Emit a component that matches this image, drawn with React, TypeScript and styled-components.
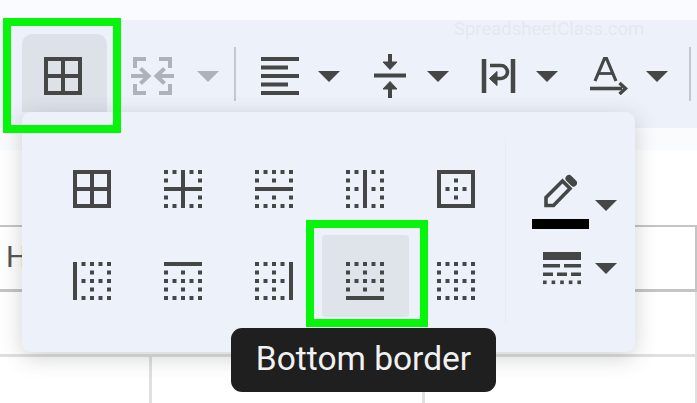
import React from "react";
import styled, { createGlobalStyle } from "styled-components";

const Global = createGlobalStyle`
  html, body { margin: 0; padding: 0; background: #fff; overflow: hidden; }
  * { box-sizing: border-box; }
`;

const ICON = "#444746";
const GREEN = "#06f50a";

const Page = styled.div`
  position: relative;
  width: 697px;
  height: 403px;
  overflow: hidden;
  background: #fff;
  font-family: Roboto, "Liberation Sans", sans-serif;
`;
const TopStrip = styled.div`
  height: 20px;
  background: #fafbfe;
`;
const Toolbar = styled.div`
  height: 108px;
  background: #edf2fa;
  padding: 14px 0 0 22px;
  display: flex;
  align-items: flex-start;
`;
const BorderButton = styled.button`
  width: 85px;
  height: 78px;
  flex: none;
  margin-right: 24px;
  padding: 23px 3px 0 0;
  border: 0;
  border-radius: 10px 10px 0 0;
  background: #dde1e8;
  display: flex;
  justify-content: center;
  align-items: flex-start;
`;
const Tool = styled.div<{ $gap: number; $after: number }>`
  display: flex;
  flex: none;
  align-items: center;
  height: 38px;
  margin-top: 23px;
  gap: ${(p) => p.$gap}px;
  margin-right: ${(p) => p.$after}px;
`;
const Caret = styled.span<{ $muted?: boolean }>`
  display: block;
  width: 0;
  height: 0;
  flex: none;
  border-left: 11px solid transparent;
  border-right: 11px solid transparent;
  border-top: 11px solid ${(p) => (p.$muted ? "#aeb3ba" : ICON)};
`;
const ToolDivider = styled.div`
  width: 2px;
  height: 54px;
  flex: none;
  margin: 13px 25px 0 0;
  background: #c4c7cb;
`;
const FormulaStrip = styled.div`
  height: 22px;
  background: #fafbfd;
`;
const Sheet = styled.div`
  padding-top: 75px;
`;
const SelectedRow = styled.div`
  height: 67px;
  border-top: 2px solid #c4c4c4;
  border-bottom: 3px solid #c4c4c4;
  border-right: 2px solid #c4c4c4;
  padding: 12px 0 0 6px;
  font-size: 30px;
  line-height: 35px;
  color: #555;
`;
const PlainRow = styled.div`
  height: 65px;
  border-bottom: 3px solid #e0e0e0;
  border-right: 2px solid #e0e0e0;
`;
const ColumnsRow = styled.div`
  height: 46px;
  display: grid;
  grid-template-columns: 152px 273px 1fr;
`;
const Cell = styled.div<{ $thin?: boolean }>`
  border-right: ${(p) => (p.$thin ? 2 : 3)}px solid #e0e0e0;
`;
const Menu = styled.div`
  position: absolute;
  left: 22px;
  top: 112px;
  width: 613px;
  height: 240px;
  border-radius: 9px;
  background: #edf2fa;
  box-shadow: 0 5px 22px rgba(60, 64, 67, 0.24);
  display: flex;
  align-items: flex-start;
`;
const BorderGrid = styled.div`
  display: grid;
  grid-template-columns: repeat(5, 91px);
  grid-auto-rows: 92px;
  padding: 31px 0 0 26.5px;
  width: 483px;
  flex: none;
`;
const GridCell = styled.div<{ $hover?: boolean }>`
  width: 87px;
  height: 82px;
  padding-top: 27px;
  border-radius: 4px;
  background: ${(p) => (p.$hover ? "#dfe3ea" : "transparent")};
  display: flex;
  align-items: flex-start;
  justify-content: center;
`;
const SidePanel = styled.div`
  width: 130px;
  height: 188px;
  margin-top: 25px;
  padding: 36px 0 0 26px;
  border-left: 1px solid #e8edf5;
`;
const PenRow = styled.div`
  display: flex;
  align-items: flex-start;
  gap: 6px;
`;
const PenColumn = styled.div`
  width: 57px;
  display: flex;
  flex-direction: column;
  align-items: center;
  gap: 11px;
`;
const ColorBar = styled.div`
  width: 57px;
  height: 10px;
  background: #000;
`;
const PenCaret = styled.div`
  margin-top: 27px;
`;
const LineRow = styled.div`
  display: flex;
  align-items: center;
  gap: 14px;
  margin: 23px 0 0 11px;
`;
const Tooltip = styled.div`
  position: absolute;
  left: 231px;
  top: 328px;
  width: 265px;
  height: 64px;
  border-radius: 11px;
  background: #1f1f1f;
  color: #f1f1f1;
  font-size: 33.5px;
  line-height: 61px;
  text-align: center;
  white-space: nowrap;
`;
const Highlight = styled.div<{ $x: number; $y: number; $w: number; $h: number }>`
  position: absolute;
  left: ${(p) => p.$x}px;
  top: ${(p) => p.$y}px;
  width: ${(p) => p.$w}px;
  height: ${(p) => p.$h}px;
  border: 8px solid ${GREEN};
`;
const Watermark = styled.div`
  position: absolute;
  left: 454px;
  top: 18px;
  font-size: 18.5px;
  line-height: 22px;
  color: #e4e8f0;
  white-space: nowrap;
`;

const P = [0, 8.5, 17, 25.5, 34];
const S = 4;

const BorderIcon = ({ rows = [], cols = [] }: { rows?: number[]; cols?: number[] }) => (
  <svg width="38" height="38" viewBox="0 0 38 38" fill={ICON}>
    {rows.map((r) => <rect key={`r${r}`} x="0" y={P[r]} width="38" height={S} />)}
    {cols.map((c) => <rect key={`c${c}`} x={P[c]} y="0" width={S} height="38" />)}
    {P.flatMap((y, r) =>
      P.map((x, c) => {
        if (r % 2 === 1 && c % 2 === 1) return null;
        if (rows.includes(r) || cols.includes(c)) return null;
        return <rect key={`${r}-${c}`} x={x} y={y} width={S} height={S} />;
      })
    )}
  </svg>
);

const ALL = { rows: [0, 2, 4], cols: [0, 2, 4] };

const ICONS: { rows?: number[]; cols?: number[]; hover?: boolean }[] = [
  ALL,
  { rows: [2], cols: [2] },
  { rows: [2] },
  { cols: [2] },
  { rows: [0, 4], cols: [0, 4] },
  { cols: [0] },
  { rows: [0] },
  { cols: [4] },
  { rows: [4], hover: true },
  {},
];

const MergeIcon = () => (
  <svg width="43" height="38" viewBox="0 0 43 38" fill="none" stroke="#aeb3ba" strokeWidth="4">
    <path d="M15 2H4V11M4 27V36H15M28 2H39V11M39 27V36H28" />
    <path d="M0 19H15M43 19H28" />
    <path d="M9.5 11.5L17.5 19L9.5 26.5M33.5 11.5L25.5 19L33.5 26.5" />
  </svg>
);
const AlignIcon = () => (
  <svg width="38" height="38" viewBox="0 0 38 38" fill={ICON}>
    <rect width="38" height="4" />
    <rect y="8.5" width="27" height="4" />
    <rect y="17" width="38" height="4" />
    <rect y="25.5" width="27" height="4" />
    <rect y="34" width="38" height="4" />
  </svg>
);
const VAlignIcon = () => (
  <svg width="38" height="44" viewBox="0 0 38 44" fill="none" stroke={ICON}>
    <path d="M3 21.5H35" strokeWidth="4" />
    <path d="M19 0V12M19 44V31" strokeWidth="4" />
    <path d="M12 8H26L19 15.5Z M12 35H26L19 27.5Z" fill={ICON} strokeWidth="1" />
  </svg>
);
const WrapIcon = () => (
  <svg width="38" height="38" viewBox="0 0 38 38" fill="none" stroke={ICON}>
    <path d="M4 2V36M33 2V36" strokeWidth="4.5" />
    <path d="M10 8.5H21A6.5 6.5 0 0 1 21 21.5H13" strokeWidth="3.6" />
    <path d="M17 14.5L9.5 21.5L17 28.5Z" fill={ICON} strokeWidth="1" />
  </svg>
);
const TextRotateIcon = () => (
  <svg width="38" height="38" viewBox="0 0 38 38" fill="none" stroke={ICON}>
    <path d="M5 24L14.5 1.5H16.5L26 24" strokeWidth="3.2" />
    <path d="M8.5 16.5H22.5" strokeWidth="2.8" />
    <path d="M0 31.5H32" strokeWidth="3.6" />
    <path d="M29.5 26L35.5 31.5L29.5 37" strokeWidth="3.4" />
  </svg>
);
const GridIcon = () => <BorderIcon {...ALL} />;
const PencilIcon = () => (
  <svg width="33" height="35" viewBox="0 0 33 35" fill="none" stroke={ICON} strokeWidth="3.6">
    <path d="M2 32.5V24.5L18.5 8L26 15.5L9.5 32.5Z" strokeLinejoin="miter" />
    <path d="M25 5.5L29.5 10" strokeWidth="7" strokeLinecap="round" />
  </svg>
);
const LineStyleIcon = () => (
  <svg width="38" height="33" viewBox="0 0 38 33" fill={ICON}>
    <rect width="38" height="8" />
    <rect y="12" width="17" height="3.5" />
    <rect x="21" y="12" width="17" height="3.5" />
    <rect y="20.5" width="10" height="3.5" />
    <rect x="14" y="20.5" width="10" height="3.5" />
    <rect x="28" y="20.5" width="10" height="3.5" />
    {[0, 8.6, 17.2, 25.8, 34.4].map((x) => (
      <rect key={x} x={x} y="28.5" width="3.6" height="3.6" />
    ))}
  </svg>
);

export default function App() {
  return (
    <Page>
      <Global />
      <TopStrip />
      <Toolbar>
        <BorderButton aria-label="Borders"><GridIcon /></BorderButton>
        <Tool $gap={23} $after={15}><MergeIcon /><Caret $muted /></Tool>
        <ToolDivider />
        <Tool $gap={19} $after={31}><AlignIcon /><Caret /></Tool>
        <Tool $gap={18} $after={31}><VAlignIcon /><Caret /></Tool>
        <Tool $gap={18} $after={32}><WrapIcon /><Caret /></Tool>
        <Tool $gap={18} $after={21}><TextRotateIcon /><Caret /></Tool>
        <ToolDivider />
      </Toolbar>
      <FormulaStrip />
      <Sheet>
        <SelectedRow>H</SelectedRow>
        <PlainRow />
        <ColumnsRow>
          <Cell />
          <Cell />
          <Cell $thin />
        </ColumnsRow>
      </Sheet>
      <Menu>
        <BorderGrid>
          {ICONS.map((ic, i) => (
            <GridCell key={i} $hover={ic.hover}>
              <BorderIcon rows={ic.rows} cols={ic.cols} />
            </GridCell>
          ))}
        </BorderGrid>
        <SidePanel>
          <PenRow>
            <PenColumn>
              <PencilIcon />
              <ColorBar />
            </PenColumn>
            <PenCaret><Caret /></PenCaret>
          </PenRow>
          <LineRow>
            <LineStyleIcon />
            <Caret />
          </LineRow>
        </SidePanel>
      </Menu>
      <Watermark>SpreadsheetClass.com</Watermark>
      <Tooltip>Bottom border</Tooltip>
      <Highlight $x={3} $y={18} $w={118} $h={115} />
      <Highlight $x={306} $y={220} $w={122} $h={107} />
    </Page>
  );
}
